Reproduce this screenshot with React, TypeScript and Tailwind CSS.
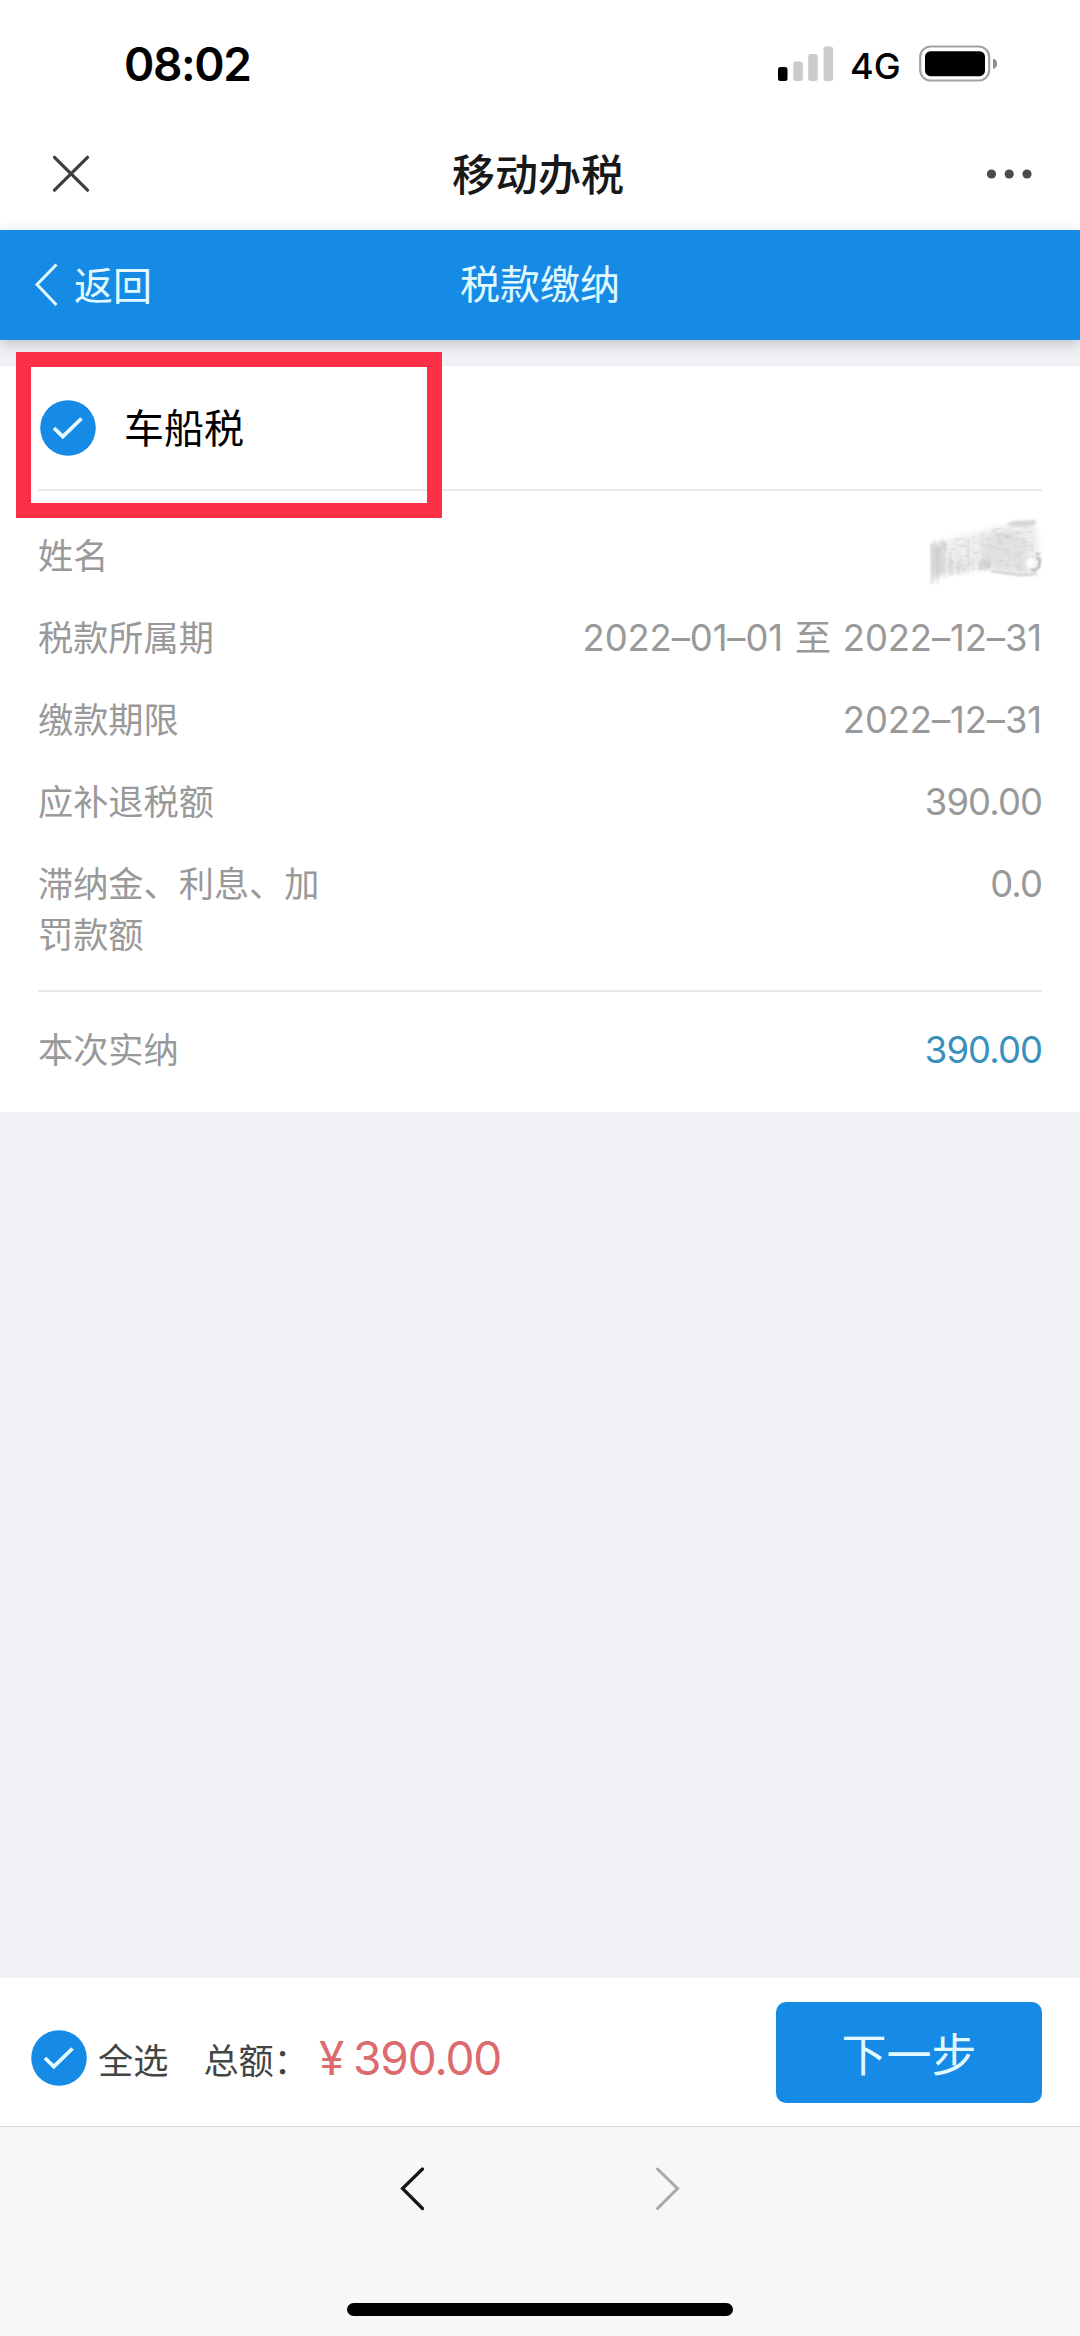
import React from "react";

const rows = [
  { label: "税款所属期", value: "2022–01–01 至 2022–12–31", spacing: "tracking-[-0.1px] [word-spacing:1.6px]" },
  { label: "缴款期限", value: "2022–12–31", spacing: "tracking-[-0.1px]" },
  { label: "应补退税额", value: "390.00", spacing: "tracking-[-0.9px]" },
];

function CheckCircle() {
  return (
    <svg className="h-14 w-14 shrink-0" viewBox="0 0 56 56" fill="none">
      <circle cx="28" cy="28" r="27.8" fill="#168be6" />
      <path d="M14 28 L22.8 36.6 L41.5 18.5" stroke="#e6fbff" strokeWidth="3.8" />
    </svg>
  );
}

function StatusBar() {
  return (
    <div className="flex h-[118px] items-start justify-between pl-[124px] pr-[82px]">
      <div className="mt-10 text-[46px] font-semibold leading-[48px] tracking-[-1.4px] text-black">08:02</div>
      <div className="mt-[45px] flex">
        <svg className="h-[37px] w-[56px]" viewBox="0 0 56 37">
          <rect x="0" y="22" width="9.5" height="14" rx="2.5" fill="#000" />
          <rect x="15.3" y="16.5" width="9.5" height="19.5" rx="2.5" fill="#cbcbcb" />
          <rect x="30.2" y="9" width="9.5" height="27" rx="2.5" fill="#cbcbcb" />
          <rect x="45.6" y="1.5" width="9.5" height="34.5" rx="2.5" fill="#cbcbcb" />
        </svg>
        <div className="ml-4 mt-[2px] w-[52px] text-[36px] font-medium leading-[38px] text-black">4G</div>
        <svg className="ml-[17px] h-[37px] w-[79px]" viewBox="0 0 79 37">
          <rect x="1.2" y="1.5" width="69" height="34" rx="10.5" fill="none" stroke="#a3a3a3" strokeWidth="2.2" />
          <rect x="6" y="6.2" width="60" height="25" rx="5.5" fill="#000" />
          <path d="M74 13.5 C79.5 15 79.5 22.5 74 24 Z" fill="#8d8d8d" />
        </svg>
      </div>
    </div>
  );
}

function Smudge() {
  const streaks = [
    [2, 25, 41, 0.5], [5, 22, 42, 0.28], [8, 28, 38, 0.35], [12, 20, 36, 0.18], [15, 24, 36, 0.22],
    [20, 38, 20, 0.45], [23, 42, 15, 0.35], [28, 42, 15, 0.45], [31, 38, 19, 0.25], [34, 44, 12, 0.25],
    [38, 24, 31, 0.25], [43, 40, 13, 0.2], [50, 43, 9, 0.5], [53, 41, 11, 0.55], [56, 42, 10, 0.5], [59, 42, 9, 0.35],
  ];
  return (
    <svg className="h-[68px] w-[116px]" viewBox="0 0 116 68" fill="none">
      <defs>
        <filter id="soft" x="-20%" y="-20%" width="140%" height="140%">
          <feGaussianBlur stdDeviation="2.6" />
        </filter>
        <filter id="fine">
          <feGaussianBlur stdDeviation="0.8" />
        </filter>
        <filter id="grain" x="0" y="0" width="100%" height="100%">
          <feTurbulence type="fractalNoise" baseFrequency="0.16 0.3" numOctaves="2" seed="4" result="noise" />
          <feColorMatrix in="noise" type="matrix" values="0 0 0 0 0.6  0 0 0 0 0.6  0 0 0 0 0.6  2.4 0 0 0 -1.05" result="specks" />
          <feComposite in="specks" in2="SourceGraphic" operator="in" />
        </filter>
      </defs>
      <g filter="url(#soft)">
        <path d="M4 26 L22 20 L50 14 L66 8 L106 5 L110 24 L109 50 L96 56 L62 52 L28 55 L5 60 Z" fill="#f0f0f0" />
        <path d="M56 18 L82 12 L100 24 L96 40 L104 52 L92 55 L62 50 L52 40 Z" fill="#e2e2e2" />
        <path d="M3 26 L14 24 L16 54 L4 60 Z" fill="#dcdcdc" />
      </g>
      <path d="M8 24 L50 16 L66 10 L104 8 L106 50 L92 54 L62 50 L20 54 Z" fill="#fff" filter="url(#grain)" opacity="0.6" />
      <g filter="url(#fine)">
        <path d="M76 7 L84 3 L107 2 L106 7 L90 9 Z" fill="#d6d6d6" />
        {streaks.map(([x, y, h, o]) => (
          <rect key={x} x={x} y={y} width="2" height={h} fill="#8a8a8a" opacity={o * 0.65} />
        ))}
        <path d="M66 17 l5 -1 l6 2 l7 1" stroke="#c0c0c0" strokeWidth="1.6" strokeDasharray="3 1.5" />
        <path d="M62 53 l30 4 l16 -1" stroke="#c4c4c4" strokeWidth="2" />
        <path d="M98 42 q5 -3 8 1 l-2 7 q-6 2 -7 -3 z" fill="#fff" />
        <path d="M107 36 l4 0 M107 40 l4 1 l-1 8 l-5 4 M102 51 l4 2" stroke="#8c8c8c" strokeWidth="1.5" />
      </g>
    </svg>
  );
}

export default function App() {
  return (
    <div className="flex h-[2336px] w-[1080px] flex-col overflow-hidden bg-[#f0f2f6] font-['Inter','Noto_Sans_CJK_SC',sans-serif]">
      <header className="h-[230px] bg-white">
        <StatusBar />
        <div className="flex h-[112px] items-center justify-between pl-[52px] pr-[46px]">
          <svg className="h-10 w-10" viewBox="0 0 40 40" fill="none" stroke="#3d3d3d" strokeWidth="3.2" strokeLinecap="round">
            <path d="M2.5 3.3 L35.5 36.2 M35.5 3.3 L2.5 36.2" />
          </svg>
          <h1 className="-ml-[2px] mt-[2px] text-[43px] font-medium leading-[60px] text-[#181818]">移动办税</h1>
          <svg className="h-3 w-[48px]" viewBox="0 0 48 12" fill="#4c4c4c">
            <circle cx="5.5" cy="6" r="4.6" />
            <circle cx="23.2" cy="6" r="4.6" />
            <circle cx="41" cy="6" r="4.6" />
          </svg>
        </div>
      </header>

      <div className="relative grid h-[110px] shrink-0 grid-cols-3 items-center bg-[#168be6] text-[#e2faff] shadow-[0_4px_14px_rgba(0,0,0,0.2)]">
        <div className="flex items-center pl-[34px]">
          <svg className="h-11 w-6" viewBox="0 0 24 44" fill="none" stroke="currentColor" strokeWidth="3">
            <path d="M22.5 1.5 L3 21.5 L22.5 42" />
          </svg>
          <span className="ml-4 mt-[2px] text-[39px] leading-[54px]">返回</span>
        </div>
        <h2 className="-mt-px text-center text-[40px] leading-[56px]">税款缴纳</h2>
      </div>

      <section className="relative mt-[26px] h-[746px] shrink-0 bg-white px-[38px]">
        <div className="absolute left-4 top-[-14px] h-[166px] w-[426px] border-[15px] border-[#fb3047]" />
        <div className="flex h-[125px] items-center border-b-2 border-[#ebebeb] pl-[2px]">
          <CheckCircle />
          <span className="ml-[28px] mt-[2px] text-[40px] leading-[56px] text-black">车船税</span>
        </div>
        <div className="flex flex-col pt-10 text-[35.2px] leading-[51px] text-[#999]">
          <div className="flex h-[51px] items-start justify-between">
            <span>姓名</span>
            <div className="-mr-[3px] -mt-[13px]">
              <Smudge />
            </div>
          </div>
          {rows.map((r) => (
            <div key={r.label} className="mt-[31px] flex h-[51px] justify-between">
              <span>{r.label}</span>
              <span className={`text-[36.4px] [font-feature-settings:'calt'_0] ${r.spacing}`}>{r.value}</span>
            </div>
          ))}
          <div className="mt-[31px] flex h-[102px] justify-between">
            <span className="w-[290px]">滞纳金、利息、加罚款额</span>
            <span className="text-[36.4px] tracking-[-0.9px]">0.0</span>
          </div>
        </div>
        <div className="mt-[29px] flex h-[118px] items-center justify-between border-t-2 border-[#e8e8e8] text-[35.2px] text-[#999]">
          <span>本次实纳</span>
          <span className="text-[36.4px] tracking-[-0.9px] text-[#3a8fbd]">390.00</span>
        </div>
      </section>

      <div className="flex-1" />

      <footer className="flex h-[148px] shrink-0 items-center justify-between bg-white pl-[31px] pr-[38px]">
        <div className="flex items-center pt-3">
          <CheckCircle />
          <span className="ml-[11px] mt-[7px] text-[35.2px] text-[#444]">全选</span>
          <span className="ml-[35px] mt-[7px] text-[35.2px] text-[#444]">总额：</span>
          <span className="ml-[10px] text-[46px] leading-[56px] tracking-[-1.1px] text-[#db6b6f] [word-spacing:-2px]">¥ 390.00</span>
        </div>
        <button className="h-[101px] w-[266px] rounded-[10px] bg-[#168be6] pt-2 text-[45px] text-[#e2faff]">下一步</button>
      </footer>

      <nav className="flex h-[210px] shrink-0 flex-col items-center border-t border-[#dcdcdc] bg-[#f7f7f7]">
        <div className="mt-[38px] flex w-[280px] justify-between">
          <svg className="h-12 w-6" viewBox="0 0 24 48" fill="none" stroke="#161616" strokeWidth="3.2" strokeLinecap="round">
            <path d="M22.5 4 L2.5 23.5 L22.5 43.5" />
          </svg>
          <svg className="h-12 w-6" viewBox="0 0 24 48" fill="none" stroke="#a9a9a9" strokeWidth="3" strokeLinecap="round">
            <path d="M1.5 4 L21.5 23.5 L1.5 43.5" />
          </svg>
        </div>
        <div className="mt-[90px] h-[13px] w-[386px] rounded-full bg-black" />
      </nav>
    </div>
  );
}
